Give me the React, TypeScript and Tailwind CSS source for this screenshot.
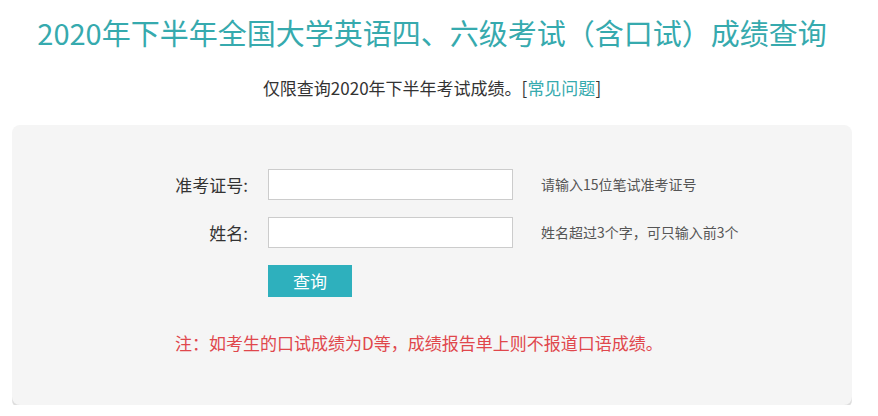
import React from "react";

export default function App() {
  return (
    <div
      className="w-[864px] bg-white pt-[12px] text-[#333]"
      style={{ fontFamily: '"Noto Sans CJK SC", "Noto Sans", sans-serif' }}
    >
      <h1 className="text-center text-[29px] leading-[40px] font-normal text-[#36aaae]">
        2020年下半年全国大学英语四、六级考试（含口试）成绩查询
      </h1>
      <p className="mt-[24px] text-center text-[17px] leading-[24px] text-[#333]">
        仅限查询2020年下半年考试成绩。[<span className="text-[#36aaae]">常见问题</span>]
      </p>
      <div className="mx-[12px] mt-[25px] h-[280px] rounded-[8px] bg-[#f5f5f5] pt-[44px] shadow-[0_3px_0_#dedede]">
        <div className="flex flex-col gap-[17px]">
          <div className="flex items-center">
            <label className="w-[244px] pr-[8px] text-right text-[17px] text-[#333]">准考证号:</label>
            <input className="ml-[12px] h-[31px] w-[245px] border border-[#ccc] bg-white outline-none" />
            <span className="ml-[28px] text-[14px] text-[#555]">请输入15位笔试准考证号</span>
          </div>
          <div className="flex items-center">
            <label className="w-[244px] pr-[8px] text-right text-[17px] text-[#333]">姓名:</label>
            <input className="ml-[12px] h-[31px] w-[245px] border border-[#ccc] bg-white outline-none" />
            <span className="ml-[28px] text-[14px] text-[#555]">姓名超过3个字，可只输入前3个</span>
          </div>
        </div>
        <div className="mt-[17px] pl-[256px]">
          <button className="h-[32px] w-[84px] bg-[#2eb0bd] text-[17px] text-white">查询</button>
        </div>
        <p className="mt-[34px] pl-[163px] text-[17px] leading-[24px] text-[#e0474c]">
          注：如考生的口试成绩为D等，成绩报告单上则不报道口语成绩。
        </p>
      </div>
    </div>
  );
}
